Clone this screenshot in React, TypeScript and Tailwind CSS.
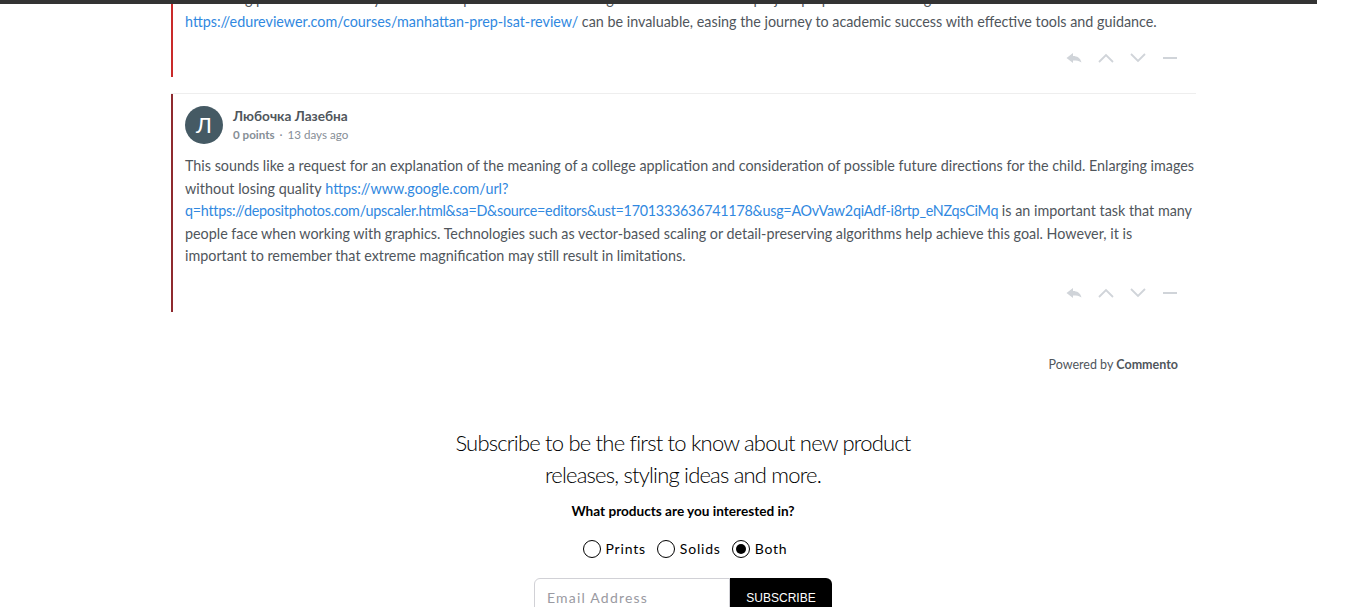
const sans = "font-['Lato','Noto_Sans',sans-serif]";

function Actions() {
  return (
    <div className="flex justify-end items-center gap-[16px] pr-[18px] text-[#d0d4d9]">
      <svg width="16" height="16" viewBox="0 0 16 16" fill="currentColor">
        <path d="M0.5 8 L7 3 V6 C11 6 14.5 8 15.5 12.5 C13 10.8 10.5 10.5 7 10.5 V13 Z" />
      </svg>
      <svg width="16" height="16" viewBox="0 0 16 16" fill="none" stroke="currentColor" strokeWidth="1.8">
        <path d="M1 12 L8 5 L15 12" />
      </svg>
      <svg width="16" height="16" viewBox="0 0 16 16" fill="none" stroke="currentColor" strokeWidth="1.8">
        <path d="M1 4 L8 11 L15 4" />
      </svg>
      <svg width="16" height="16" viewBox="0 0 16 16" fill="none" stroke="currentColor" strokeWidth="2">
        <path d="M1 8 H15" />
      </svg>
    </div>
  );
}

const link = "text-[#3088e0]";

export default function App() {
  return (
    <div className="relative h-[607px] w-[1366px] overflow-hidden bg-white">
      {/* scroll progress bar */}
      <div className="absolute top-0 left-0 z-10 h-[4px] w-[1317px] bg-[#333333]" />

      <div className={`ml-[171px] w-[1025px] ${sans} text-[14.33px] leading-[22.5px] text-[#50565c]`}>
        <div className="-mt-[12px] h-[89px] border-l-2 border-[#c92a2a] pl-[12px]">
          <p className="whitespace-nowrap">
            Interesting post. Success in any endeavor requires effort. The same goes for education and project preparation. Trusting resources like
          </p>
          <p className="whitespace-nowrap">
            <span className={link}>https://edureviewer.com/courses/manhattan-prep-lsat-review/</span> can be invaluable, easing the journey to academic success with effective tools and guidance.
          </p>
          <div className="mt-[17px]">
            <Actions />
          </div>
        </div>

        <div className="mt-[16px] h-[219px] border-t border-[#eeeeee]">
          <div className="h-full border-l-2 border-[#8e2a2f] pl-[12px] pt-[12px]">
            <div className="flex items-center gap-[10px]">
              <div className="flex h-[38px] w-[38px] items-center justify-center rounded-full bg-[#455a64] text-[22px] text-white">
                Л
              </div>
              <div>
                <div className="text-[13.65px] leading-[20px] font-bold text-[#50565c]">Любочка Лазебна</div>
                <div className="text-[11.6px] leading-[18px] text-[#868e96]">
                  <b>0 points</b> <span className="mx-[2px]">·</span> 13 days ago
                </div>
              </div>
            </div>
            <div className="mt-[11px]">
              <p className="whitespace-nowrap">
                This sounds like a request for an explanation of the meaning of a college application and consideration of possible future directions for the child. Enlarging images
              </p>
              <p>
                <span className="tracking-[0.05px]">without losing quality</span> <span className={link}>https://www.google.com/url?</span>
              </p>
              <p className="whitespace-nowrap">
                <span className={`${link} tracking-[-0.25px]`}>q=https://depositphotos.com/upscaler.html&amp;sa=D&amp;source=editors&amp;ust=1701333636741178&amp;usg=AOvVaw2qiAdf-i8rtp_eNZqsCiMq</span> is an important task that many
              </p>
              <p>
                people face when working with graphics. Technologies such as vector-based scaling or detail-preserving algorithms help achieve this goal. However, it is
              </p>
              <p>important to remember that extreme magnification may still result in limitations.</p>
            </div>
            <div className="mt-[17px]">
              <Actions />
            </div>
          </div>
        </div>

        <div className="mt-[44px] pr-[18px] text-right text-[12.5px] leading-[18px] text-[#50565c]">
          Powered by <b>Commento</b>
        </div>
      </div>

      <div className="mt-[53px] flex flex-col items-center font-['Lato',sans-serif] text-black">
        <h2 className="w-[480px] text-center text-[22px] leading-[32px] font-light tracking-[-0.8px]">
          Subscribe to be the first to know about new product
          <br />
          releases, styling ideas and more.
        </h2>
        <p className="mt-[11px] text-[13.6px] leading-[18px] font-bold">What products are you interested in?</p>
        <div className="mt-[19px] flex items-center pl-[4px] text-[14px] leading-[20px] tracking-[0.8px]">
          <span className="h-[18px] w-[18px] rounded-full border border-black" />
          <span className="ml-[5px]">Prints</span>
          <span className="ml-[11px] h-[18px] w-[18px] rounded-full border border-black" />
          <span className="ml-[5px]">Solids</span>
          <span className="ml-[11px] flex h-[18px] w-[18px] items-center justify-center rounded-full border border-black">
            <span className="h-[10px] w-[10px] rounded-full bg-black" />
          </span>
          <span className="ml-[5px]">Both</span>
        </div>
        <div className="mt-[19px] flex h-[40px] w-[298px]">
          <div className="flex-1 rounded-tl-[6px] border border-[#d1d1d6] pl-[12px] pt-[9px] text-[14px] leading-[20px] tracking-[1.2px] text-[#9a9aa2]">
            Email Address
          </div>
          <div className="w-[102px] rounded-tr-[6px] bg-black pt-[10px] text-center font-['Liberation_Sans',sans-serif] text-[12px] leading-[20px] text-white">
            SUBSCRIBE
          </div>
        </div>
      </div>
    </div>
  );
}
